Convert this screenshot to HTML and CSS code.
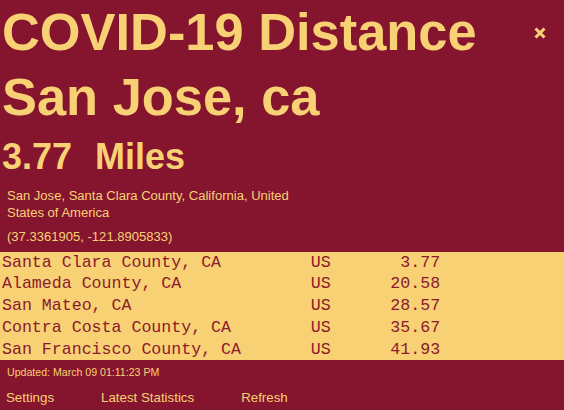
FILE: index.html
```html
<!DOCTYPE html>
<html lang="en">
<head>
<meta charset="utf-8">
<title>COVID-19 Distance</title>
<link rel="stylesheet" href="styles.css">
</head>
<body>
<div class="app">
  <button class="close" aria-label="Close">
    <svg width="12" height="12" viewBox="0 0 12 12"><path d="M1.5 1.5 L10.5 10.5 M10.5 1.5 L1.5 10.5" stroke="currentColor" stroke-width="3" fill="none"/></svg>
  </button>
  <header class="header">
    <h1 class="title">COVID-19 Distance</h1>
    <h1 class="title">San Jose, ca</h1>
    <h2 class="distance"><span class="value">3.77</span><span class="unit">Miles</span></h2>
  </header>
  <section class="location">
    <p class="address">San Jose, Santa Clara County, California, United States of America</p>
    <p class="coords">(37.3361905, -121.8905833)</p>
  </section>
  <div class="cases">
    <div class="row"><span class="name">Santa Clara County, CA</span><span class="country">US</span><span class="dist">3.77</span></div>
    <div class="row"><span class="name">Alameda County, CA</span><span class="country">US</span><span class="dist">20.58</span></div>
    <div class="row"><span class="name">San Mateo, CA</span><span class="country">US</span><span class="dist">28.57</span></div>
    <div class="row"><span class="name">Contra Costa County, CA</span><span class="country">US</span><span class="dist">35.67</span></div>
    <div class="row"><span class="name">San Francisco County, CA</span><span class="country">US</span><span class="dist">41.93</span></div>
  </div>
  <p class="updated">Updated: March 09 01:11:23 PM</p>
  <nav class="links">
    <a href="#">Settings</a>
    <a href="#">Latest Statistics</a>
    <a href="#">Refresh</a>
  </nav>
</div>
</body>
</html>
```
FILE: styles.css
```css
html, body {
  margin: 0;
  padding: 0;
  background: #85152e;
}
.app {
  position: relative;
  width: 564px;
  height: 410px;
  overflow: hidden;
  background: #85152e;
  color: #f9d175;
  font-family: "Liberation Sans", Arial, sans-serif;
}
.close {
  position: absolute;
  top: 27px;
  left: 534px;
  width: 12px;
  height: 12px;
  padding: 0;
  border: 0;
  background: none;
  color: #f9d175;
  display: flex;
}
.header {
  padding: 0 0 0 2px;
}
.title {
  margin: 0;
  font-size: 52.4px;
  line-height: 65px;
  font-weight: bold;
}
.distance {
  margin: 6px 0 0;
  font-size: 36px;
  line-height: 42px;
  font-weight: bold;
}
.unit {
  margin-left: 23px;
}
.location {
  padding-left: 7px;
  margin-top: 10px;
  font-size: 13.05px;
  line-height: 16.5px;
}
.address {
  margin: 0;
  width: 290px;
}
.coords {
  margin: 8px 0 0;
}
.cases {
  margin-top: 6px;
  background: #f9d175;
  color: #8a1a2c;
  font-family: "Courier New", "Liberation Mono", monospace;
  font-size: 16.6px;
  line-height: 21.8px;
  padding-left: 2px;
}
.row {
  display: grid;
  grid-template-columns: 31ch 2ch 11ch;
}
.dist {
  text-align: right;
}
.updated {
  margin: 6px 0 0;
  padding-left: 7px;
  font-size: 10.6px;
  line-height: 13px;
}
.links {
  display: flex;
  gap: 47px;
  margin-top: 11px;
  padding-left: 6px;
  font-size: 13.3px;
  line-height: 16px;
}
.links a {
  color: #f9d175;
  text-decoration: none;
}
```
